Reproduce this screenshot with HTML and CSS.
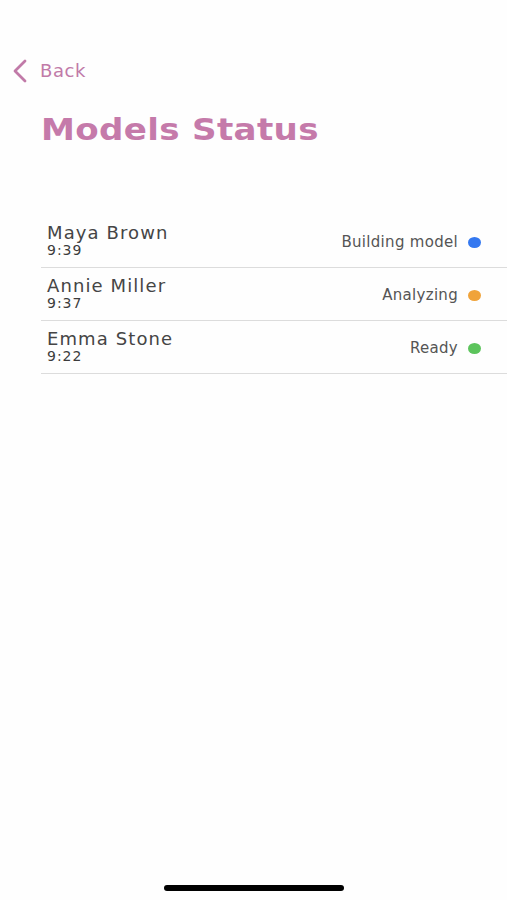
FILE: index.html
```html
<!DOCTYPE html>
<html lang="en">
<head>
    <meta charset="UTF-8">
    <meta name="viewport" content="width=device-width, initial-scale=1.0">
    <title>Models Status</title>
    <link rel="stylesheet" href="styles.css">
</head>
<body>

    <div class="screen">
        <a class="back" href="#">
            <svg class="back-icon" width="16" height="24" viewBox="0 0 16 24">
                <path d="M13 2 L3 12 L13 22" fill="none" stroke="#c17aa8" stroke-width="2.8" stroke-linecap="round" stroke-linejoin="round"/>
            </svg>
            <span>Back</span>
        </a>

        <h1 class="title">Models Status</h1>

        <ul class="model-list">
            <li class="model-row">
                <div class="model-info">
                    <div class="model-name">Maya Brown</div>
                    <div class="model-time">9:39</div>
                </div>
                <div class="model-status">
                    <span>Building model</span>
                    <span class="dot dot-blue"></span>
                </div>
            </li>
            <li class="model-row">
                <div class="model-info">
                    <div class="model-name">Annie Miller</div>
                    <div class="model-time">9:37</div>
                </div>
                <div class="model-status">
                    <span>Analyzing</span>
                    <span class="dot dot-orange"></span>
                </div>
            </li>
            <li class="model-row">
                <div class="model-info">
                    <div class="model-name">Emma Stone</div>
                    <div class="model-time">9:22</div>
                </div>
                <div class="model-status">
                    <span>Ready</span>
                    <span class="dot dot-green"></span>
                </div>
            </li>
        </ul>

        <div class="home-bar"></div>
    </div>

</body>
</html>
```

FILE: styles.css
```css
body {
    margin: 0;
    background-color: #fefefe;
    font-family: "DejaVu Sans", "Liberation Sans", sans-serif;
}
.screen {
    height: 900px;
    display: flex;
    flex-direction: column;
    overflow: hidden;
}
.back {
    align-self: flex-start;
    display: flex;
    align-items: center;
    gap: 12px;
    margin: 59px 0 0 12px;
    color: #c17aa8;
    text-decoration: none;
    font-size: 18px;
    letter-spacing: 0.6px;
    line-height: 24px;
}
.title {
    align-self: flex-start;
    margin: 28px 0 0 41px;
    color: #c57aaa;
    font-size: 31px;
    letter-spacing: 0.3px;
    font-weight: bold;
    line-height: 36px;
    transform: scaleX(1.1);
    transform-origin: left center;
}
.model-list {
    list-style: none;
    margin: 68px 0 0 41px;
    padding: 0;
}
.model-row {
    display: flex;
    align-items: center;
    justify-content: space-between;
    height: 52px;
    border-bottom: 1px solid #dcdcdc;
    padding-left: 6px;
    padding-right: 26px;
}
.model-info {
    align-self: flex-start;
    padding-top: 8px;
}
.model-name {
    color: #454545;
    font-size: 18px;
    line-height: 19px;
    letter-spacing: 1.1px;
}
.model-time {
    margin-top: 1px;
    color: #3c3c3c;
    font-size: 14px;
    line-height: 14px;
    letter-spacing: 1px;
}
.model-status {
    display: flex;
    align-items: center;
    gap: 10px;
    color: #555555;
    font-size: 15px;
    letter-spacing: 0.3px;
    margin-top: 2px;
}
.dot {
    width: 13px;
    height: 11px;
    border-radius: 50%;
}
.dot-blue {
    background-color: #3478f0;
}
.dot-orange {
    background-color: #f0a33a;
}
.dot-green {
    background-color: #5cc45c;
}
.home-bar {
    margin: auto auto 9px;
    width: 180px;
    height: 6px;
    border-radius: 3px;
    background-color: #000;
}
```
